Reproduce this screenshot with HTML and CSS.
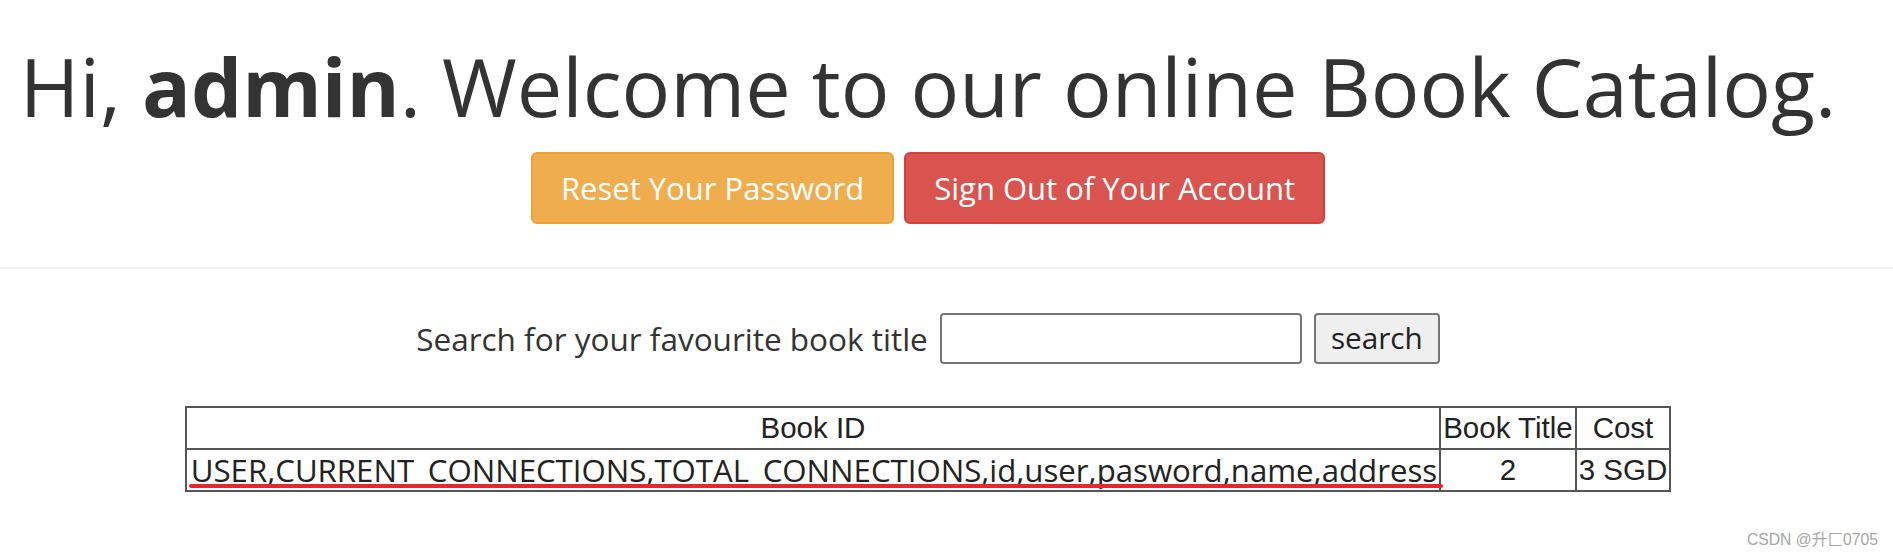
FILE: index.html
```html
<!DOCTYPE html>
<html lang="en">
<head>
<meta charset="utf-8">
<title>Book Catalog</title>
<link rel="stylesheet" href="styles.css">
</head>
<body>
<div class="wrap">
  <h1 class="title">Hi, <b>admin</b>. Welcome to our online Book Catalog.</h1>
  <div class="actions">
    <a class="btn btn-warning" href="#">Reset Your Password</a>
    <a class="btn btn-danger" href="#">Sign Out of Your Account</a>
  </div>
</div>
<hr class="rule">
<div class="wrap">
  <form class="search">
    <label class="search-label" for="q">Search for your favourite book title</label>
    <input class="search-input" id="q" type="text">
    <button class="search-btn" type="button">search</button>
  </form>
  <table class="books">
    <tr><th>Book ID</th><th>Book Title</th><th>Cost</th></tr>
    <tr><td class="long"><span class="mark">USER,CURRENT_CONNECTIONS,TOTAL_CONNECTIONS,id,user,pasword,name,address</span></td><td>2</td><td>3 SGD</td></tr>
  </table>
</div>
<div class="watermark">CSDN @升匚0705</div>
</body>
</html>
```
FILE: styles.css
```css
html, body {
  margin: 0;
  padding: 0;
  background: #fff;
}
body {
  font-family: "Open Sans", "Noto Sans CJK SC", sans-serif;
  color: #333;
  width: 1893px;
  height: 555px;
  overflow: hidden;
  position: relative;
}
.wrap {
  width: 1856px;
  display: flex;
  flex-direction: column;
  align-items: center;
}
.title {
  margin: 41px 0 0;
  font-size: 81px;
  line-height: 89px;
  font-weight: 400;
  white-space: nowrap;
}
.title b {
  font-weight: 700;
}
.actions {
  display: flex;
  gap: 10px;
  margin-top: 22px;
}
.btn {
  display: block;
  font-size: 31px;
  line-height: 44px;
  padding: 12px 28px;
  border: 2px solid transparent;
  border-radius: 6px;
  color: #fff;
  text-decoration: none;
  white-space: nowrap;
}
.btn-warning {
  background: #f0ad4e;
  border-color: #eea236;
}
.btn-danger {
  background: #d9534f;
  border-color: #d43f3a;
}
.rule {
  margin: 43px 0 0;
  border: 0;
  border-top: 2px solid #eee;
  height: 0;
}
.search {
  display: flex;
  align-items: center;
  gap: 12px;
  margin-top: 44px;
}
.search-label {
  font-size: 31.5px;
  line-height: 44px;
  white-space: nowrap;
}
.search-input {
  box-sizing: border-box;
  width: 362px;
  height: 51px;
  border: 2px solid #767676;
  border-radius: 4px;
  padding: 2px 6px;
  font-size: 28px;
  background: #fff;
  margin: 0;
}
.search-btn {
  box-sizing: border-box;
  width: 126px;
  height: 51px;
  border: 2px solid #767676;
  border-radius: 4px;
  background: #efefef;
  font-family: "Open Sans", sans-serif;
  font-size: 29.7px;
  color: #222;
  padding: 0 0 2px;
  margin: 0;
}
.books {
  margin-top: 42px;
  border-collapse: collapse;
  border: 2px solid #555;
  font-family: "Liberation Sans", Arial, sans-serif;
  font-size: 29.5px;
  color: #222;
}
.books th, .books td {
  border: 2px solid #555;
  padding: 2px 2px;
  line-height: 36px;
  font-weight: 400;
  text-align: center;
  white-space: nowrap;
}
.books td.long {
  font-family: "Open Sans", sans-serif;
  font-size: 31.2px;
  padding: 2px 2px 2px 4px;
}
.mark {
  position: relative;
}
.mark::after {
  content: "";
  position: absolute;
  left: -2px;
  right: -6px;
  top: 34.5px;
  height: 4.5px;
  border-radius: 2px;
  background: #e82630;
}
.watermark {
  position: absolute;
  left: 1747px;
  top: 531px;
  font-family: "Liberation Sans", "Noto Sans CJK SC", sans-serif;
  font-size: 15.7px;
  line-height: 18px;
  color: #a6a6a6;
  white-space: nowrap;
}
```
